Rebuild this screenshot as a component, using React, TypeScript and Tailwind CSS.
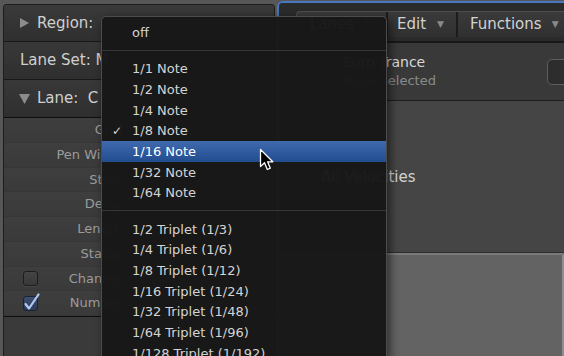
import React from "react"

const noteItems = ["1/1 Note", "1/2 Note", "1/4 Note", "1/8 Note", "1/16 Note", "1/32 Note", "1/64 Note"]
const tripletItems = [
  "1/2 Triplet (1/3)",
  "1/4 Triplet (1/6)",
  "1/8 Triplet (1/12)",
  "1/16 Triplet (1/24)",
  "1/32 Triplet (1/48)",
  "1/64 Triplet (1/96)",
  "1/128 Triplet (1/192)",
]

const params: { label: string; box?: "on" | "off" }[] = [
  { label: "Grid" },
  { label: "Pen Width" },
  { label: "Style" },
  { label: "Delay" },
  { label: "Length" },
  { label: "Status" },
  { label: "Channel", box: "off" },
  { label: "Number", box: "on" },
]

function Checkbox({ checked }: { checked: boolean }) {
  if (!checked) {
    return (
      <div className="h-[15px] w-[15px] rounded-[3px] border border-[#1d1d1d] bg-gradient-to-b from-[#454545] to-[#383838] shadow-[0_1px_0_rgba(255,255,255,0.06)]" />
    )
  }
  return (
    <div className="relative h-[15px] w-[15px] rounded-[3px] border border-[#1b2233] bg-gradient-to-b from-[#3d4f72] to-[#2c3a57]">
      <svg className="absolute -left-[1px] -top-[4px] overflow-visible" width="17" height="19" viewBox="0 0 17 19">
        <path d="M2.5 11 L6 15.5 L15.5 1.5" fill="none" stroke="#b3cbf2" strokeWidth="2.2" strokeLinecap="round" strokeLinejoin="round" />
      </svg>
    </div>
  )
}

function LeftPanel() {
  return (
    <div className="ml-[3px] mt-[4px] flex h-[360px] w-[272px] shrink-0 flex-col overflow-hidden rounded-t-[4px] border-x border-t border-[#1c1c1c] bg-[#3b3b3b] text-[#cfcfcf]">
      <div className="flex h-[37px] shrink-0 items-center gap-[8px] border-b border-[#181818] bg-gradient-to-b from-[#3a3a3a] to-[#2f2f2f] pl-[16px] text-[15px]">
        <svg width="9" height="10" viewBox="0 0 9 10">
          <path d="M0 0 L9 5 L0 10 Z" fill="#8c8c8c" />
        </svg>
        <span>Region:</span>
      </div>
      <div className="flex h-[38px] shrink-0 items-center border-b border-[#181818] bg-gradient-to-b from-[#383838] to-[#2f2f2f] pl-[16px] text-[15px]">
        <span className="whitespace-pre">Lane Set: M</span>
      </div>
      <div className="flex h-[38px] shrink-0 items-center gap-[7px] border-b border-[#0e0e0e] bg-gradient-to-b from-[#383838] to-[#2f2f2f] pl-[15px] text-[15px]">
        <svg width="11" height="10" viewBox="0 0 11 10">
          <path d="M0 0 L11 0 L5.5 10 Z" fill="#8c8c8c" />
        </svg>
        <span className="whitespace-pre">Lane:  C</span>
      </div>
      {params.map((p) => (
        <div
          key={p.label}
          className="flex h-[24.75px] shrink-0 items-center border-b border-[#373737] bg-gradient-to-b from-[#3e3e3e] to-[#3a3a3a] text-[13px] text-[#9b9b9b]"
        >
          <div className="flex w-[118px] items-center pl-[19px]">
            {p.box ? <Checkbox checked={p.box === "on"} /> : <div className="w-[15px]" />}
            <span className="flex-1 text-right">{p.label}</span>
          </div>
        </div>
      ))}
      <div className="flex-1 border-t border-[#0e0e0e] bg-[#3a3a3a]" />
    </div>
  )
}

function RightPanel() {
  return (
    <div className="ml-[2px] mt-[1px] flex h-[360px] flex-1 flex-col overflow-hidden rounded-tl-[6px] border-l-2 border-t-2 border-[#4677bf] bg-[#2c2c2c]">
      <div className="h-[40px] shrink-0 border-b-2 border-[#181818] bg-[#2b2b2b] pt-[8px]">
        <div className="ml-[17px] flex h-[26px] overflow-hidden rounded-tl-[4px] border-l border-t border-[#4e4e4e] bg-gradient-to-b from-[#3a3a3a] to-[#303030] text-[15px] text-[#d2d2d2]">
          <div className="flex w-[89px] items-center pl-[13px]">
            <span>Lanes</span>
            <span className="ml-[10px] text-[9px] text-[#8a8a8a]">▼</span>
          </div>
          <div className="flex w-[70px] items-center border-l-2 border-[#1c1c1c] pl-[9px]">
            <span>Edit</span>
            <span className="ml-[11px] text-[9px] text-[#8a8a8a]">▼</span>
          </div>
          <div className="flex flex-1 items-center border-l-2 border-[#1c1c1c] pl-[12px]">
            <span>Functions</span>
            <span className="ml-[10px] text-[9px] text-[#8a8a8a]">▼</span>
          </div>
        </div>
      </div>
      <div className="flex h-[58px] shrink-0 items-center border-b border-[#1e1e1e] bg-[#393939]">
        <div className="flex flex-col pl-[64px] pt-[1px]">
          <span className="text-[14px] leading-[18px] text-[#d8d8d8]">Euro Trance</span>
          <span className="text-[13px] leading-[20px] text-[#8b8b8b]">None selected</span>
        </div>
        <div className="-mr-[13px] ml-auto h-[26px] w-[30px] rounded-[5px] border border-[#5e5e5e] bg-[#2d2d2d]" />
      </div>
      <div className="h-[151px] shrink-0 bg-[#454545] pt-[65px]">
        <div className="flex h-[22px] items-center">
          <div className="ml-[5px] h-[10px] w-[10px] rounded-full border border-[#2a2a2a] bg-[#3a3a3a]" />
          <span className="ml-[27px] text-[15px] text-[#d2d2d2]">All Velocities</span>
        </div>
      </div>
      <div className="h-[3px] shrink-0 border-t border-[#2e2e2e] bg-[#7a7a7a]" />
      <div className="flex flex-1 bg-[#636363]">
        <div className="flex-1" />
        <div className="w-[2px] bg-[#8e8e8e]" />
      </div>
    </div>
  )
}

function MenuItem({ label, checked, active }: { label: string; checked?: boolean; active?: boolean }) {
  return (
    <div
      className={`flex h-[20.67px] items-center pl-[10px] text-[13px] ${
        active ? "bg-gradient-to-b from-[#3f6aae] to-[#214d90] text-white" : "text-[#d4d4d4]"
      }`}
    >
      <span className="w-[20px] text-[12px]">{checked ? "✓" : ""}</span>
      <span>{label}</span>
    </div>
  )
}

function QuantizeMenu() {
  return (
    <div className="absolute left-[101px] top-[16px] h-[360px] w-[286px] rounded-[5px] border border-[#4c4c4c] border-b-0 bg-[rgba(24,24,24,0.975)] pt-[5px] shadow-[3px_3px_10px_rgba(0,0,0,0.55)]">
      <MenuItem label="off" />
      <div className="h-[16px] pt-[7px]">
        <div className="h-px bg-[#363636]" />
      </div>
      {noteItems.map((n) => (
        <MenuItem key={n} label={n} checked={n === "1/8 Note"} active={n === "1/16 Note"} />
      ))}
      <div className="h-[16px] pt-[7px]">
        <div className="h-px bg-[#363636]" />
      </div>
      {tripletItems.map((n) => (
        <MenuItem key={n} label={n} />
      ))}
    </div>
  )
}

function Cursor() {
  return (
    <svg className="absolute left-[259px] top-[148px]" width="16" height="25" viewBox="0 0 16 25">
      <path
        d="M1.5 1.5 L1.5 18.5 L5.5 14.8 L8.3 21.5 L11.3 20.2 L8.6 13.8 L13.8 13.8 Z"
        fill="#000"
        stroke="#fff"
        strokeWidth="1.3"
        strokeLinejoin="round"
      />
    </svg>
  )
}

export default function App() {
  return (
    <div className="relative flex h-[356px] w-[564px] items-start overflow-hidden bg-[#575757] font-['DejaVu_Sans',sans-serif]">
      <LeftPanel />
      <RightPanel />
      <QuantizeMenu />
      <Cursor />
    </div>
  )
}
